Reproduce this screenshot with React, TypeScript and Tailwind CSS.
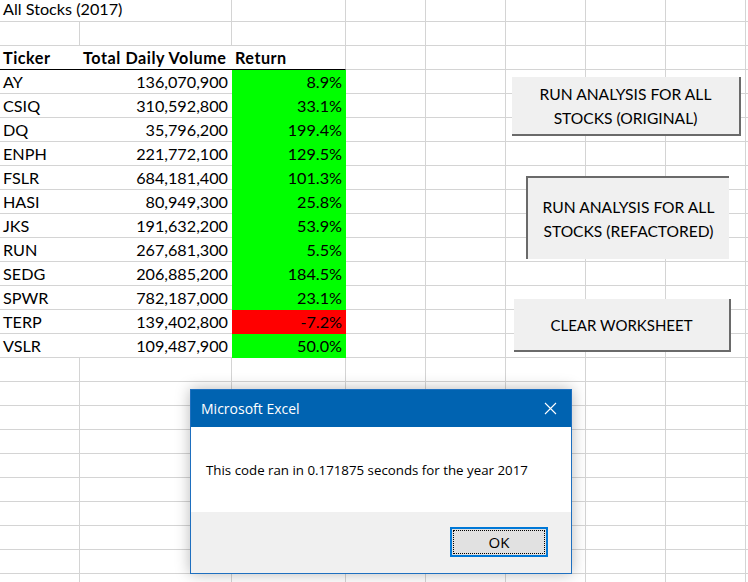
import React from "react";

const rows: [string, string, string, boolean][] = [
  ["AY", "136,070,900", "8.9%", true],
  ["CSIQ", "310,592,800", "33.1%", true],
  ["DQ", "35,796,200", "199.4%", true],
  ["ENPH", "221,772,100", "129.5%", true],
  ["FSLR", "684,181,400", "101.3%", true],
  ["HASI", "80,949,300", "25.8%", true],
  ["JKS", "191,632,200", "53.9%", true],
  ["RUN", "267,681,300", "5.5%", true],
  ["SEDG", "206,885,200", "184.5%", true],
  ["SPWR", "782,187,000", "23.1%", true],
  ["TERP", "139,402,800", "-7.2%", false],
  ["VSLR", "109,487,900", "50.0%", true],
];

const cell = "border-r border-b border-[#d4d4d4] flex items-end pb-[3px] px-[3px] whitespace-nowrap";

function EmptyRow({ from = 0 }: { from?: number }) {
  const cols = 9 - from;
  return (
    <>
      {Array.from({ length: cols }).map((_, i) => (
        <div key={i} className={cell}></div>
      ))}
    </>
  );
}

export default function App() {
  const emptyRowsBelow = 10;
  return (
    <div
      className="relative w-[748px] h-[582px] overflow-hidden bg-white text-black"
      style={{ fontFamily: "Lato, 'Open Sans', sans-serif" }}
    >
      <div className="grid grid-cols-[80px_152px_114px_80px_80px_80px_80px_80px_1fr] grid-rows-[22px_repeat(24,24px)] text-[16.2px] leading-none">
        {/* Row 1 */}
        <div className={`${cell} col-span-2 pb-[4px]`}>All Stocks (2017)</div>
        <EmptyRow from={2} />
        {/* Row 2 */}
        <EmptyRow />
        {/* Row 3 header */}
        <div className={`${cell} font-bold tracking-[0.5px] border-r-0 border-b-black`}>Ticker</div>
        <div className={`${cell} font-bold tracking-[0.55px] border-r-0 border-b-black`}>Total Daily Volume</div>
        <div className={`${cell} font-bold tracking-[0.5px] border-b-black`}>Return</div>
        <EmptyRow from={3} />
        {rows.map(([t, v, r, pos], i) => {
          const fill = pos ? "bg-[#00ff00] border-[#00ff00]" : "bg-[#ff0000] border-[#ff0000]";
          return (
            <React.Fragment key={i}>
              <div className={`${cell} border-r-0`}>{t}</div>
              <div className={`${cell} justify-end pr-[4px] border-r-0`}>{v}</div>
              <div className={`border-r border-b flex items-end justify-end pb-[3px] pr-[3px] ${fill}`}>
                {r}
              </div>
              <EmptyRow from={3} />
            </React.Fragment>
          );
        })}
        {Array.from({ length: emptyRowsBelow }).map((_, i) => (
          <EmptyRow key={`e${i}`} />
        ))}
      </div>

      {/* Buttons */}
      <div className="absolute left-[512px] top-[77px] w-[229px] h-[59px] bg-[#f0f0f0] border-r-2 border-b-2 border-[#6a6a6a] flex items-center justify-center text-center text-[15.6px] leading-[24px]">
        RUN ANALYSIS FOR ALL
        <br />
        STOCKS (ORIGINAL)
      </div>
      <div className="absolute left-[526px] top-[176px] w-[203px] h-[83px] bg-[#f0f0f0] border-l-2 border-t-2 border-[#6a6a6a] flex items-center justify-center text-center text-[15.6px] leading-[24px]">
        RUN ANALYSIS FOR ALL
        <br />
        STOCKS (REFACTORED)
      </div>
      <div className="absolute left-[514px] top-[299px] w-[217px] h-[53px] bg-[#f0f0f0] border-r-2 border-b-2 border-[#6a6a6a] flex items-center justify-center text-center text-[15px] leading-[24px]">
        CLEAR WORKSHEET
      </div>

      {/* Dialog */}
      <div
        className="absolute left-[190px] top-[389px] w-[382px] h-[185px] border border-[#1e6fbf] bg-white flex flex-col shadow-[0_0_14px_rgba(0,0,0,0.28)]"
        style={{ fontFamily: "'Open Sans', 'Noto Sans', sans-serif" }}
      >
        <div className="h-[37px] bg-[#0063b1] flex items-center justify-between pl-[10px] pr-[14px] text-white text-[14px]">
          <span>Microsoft Excel</span>
          <svg width="13" height="13" viewBox="0 0 13 13" fill="none" stroke="white" strokeWidth="1.1">
            <path d="M1 1 L12 12 M12 1 L1 12" />
          </svg>
        </div>
        <div className="h-[85px] bg-white flex items-center pl-[15px] pt-[3px] text-[13.3px] text-black">
          This code ran in 0.171875 seconds for the year 2017
        </div>
        <div className="flex-1 bg-[#f0f0f0] flex justify-end items-start pt-[15px] pr-[23px]">
          <div className="w-[98px] h-[30px] border-2 border-[#0078d7] bg-[#e1e1e1] p-[1px]">
            <div className="w-full h-full border border-dotted border-black flex items-center justify-center text-[15px]">
              OK
            </div>
          </div>
        </div>
      </div>
    </div>
  );
}
